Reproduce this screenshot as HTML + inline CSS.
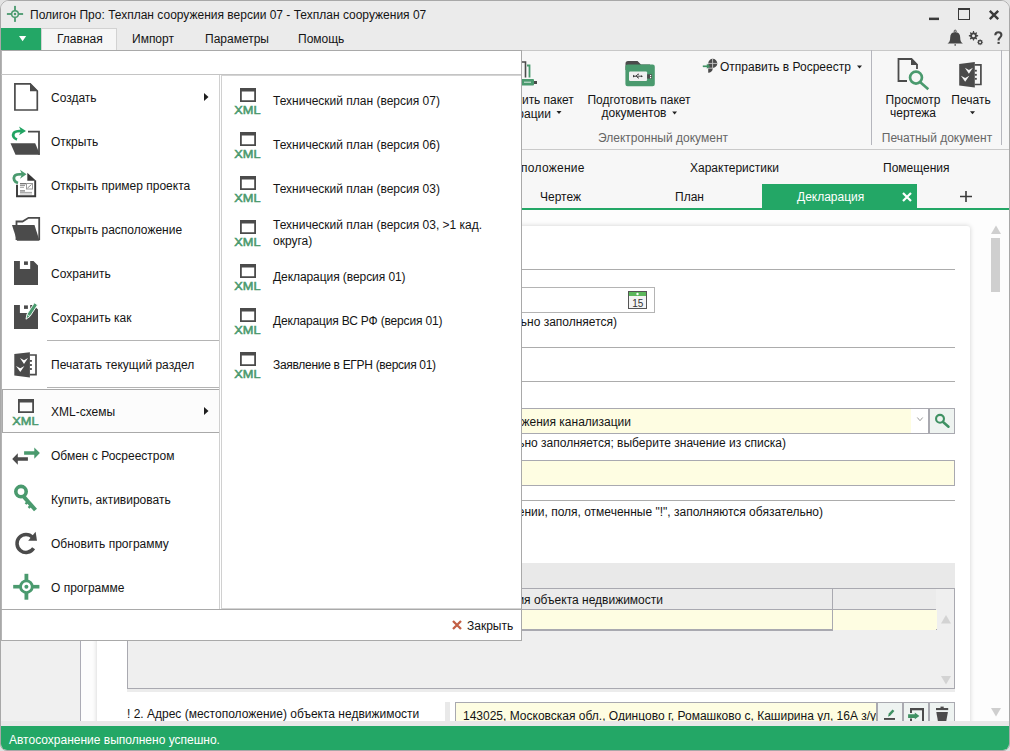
<!DOCTYPE html>
<html><head><meta charset="utf-8">
<style>
*{box-sizing:border-box}
html,body{margin:0;padding:0}
body{width:1010px;height:751px;overflow:hidden;position:relative;background:#e2e2e2;font-family:"Liberation Sans",sans-serif;font-size:12px;color:#141414}
.a{position:absolute}
.t{position:absolute;white-space:nowrap;line-height:15px;height:15px}
svg{position:absolute;overflow:visible}
</style></head><body>
<div class="a" style="left:0;top:0;width:1010px;height:751px;border:1px solid #a8a8a8;border-radius:9px 9px 7px 7px;background:#fafafa"></div>
<div class="a" style="left:1px;top:1px;width:1008px;height:27px;background:#ebebeb;border-radius:8px 8px 0 0"></div>
<svg style="left:0;top:0" width="30" height="28">
  <g fill="#4a9a6e"><rect x="14.1" y="5.9" width="1.8" height="16"/><rect x="6.9" y="13.1" width="16.2" height="1.8"/></g>
  <circle cx="15" cy="14" r="3.35" fill="#ebebeb" stroke="#4a9a6e" stroke-width="1.5"/>
  <circle cx="15" cy="14" r="1.25" fill="#4a9a6e"/>
</svg>
<div class="t" style="left:30px;top:8px;">Полигон Про: Техплан сооружения версии 07 - Техплан сооружения 07</div>
<svg style="left:0;top:0" width="1010" height="28"><rect x="929" y="17.6" width="10" height="2.5" fill="#3a3a3a"/></svg>
<div class="a" style="left:958px;top:8px;width:12px;height:12px;border:1.5px solid #3a3a3a;border-top-width:2px"></div>
<svg style="left:989px;top:10px" width="10" height="10"><path d="M0.8 0.8L9.2 9.2M9.2 0.8L0.8 9.2" stroke="#3a3a3a" stroke-width="2.4"/></svg>
<div class="a" style="left:1px;top:28px;width:1008px;height:22px;background:#ebebeb"></div>
<div class="a" style="left:1px;top:28px;width:40px;height:22px;background:#23a766"></div>
<svg style="left:19px;top:36px" width="7" height="6"><path d="M0 0H7.2L3.6 5.2Z" fill="#fff"/></svg>
<div class="a" style="left:41px;top:28px;width:76px;height:23px;background:#f6f6f6;border:1px solid #d2d2d2;border-bottom:none"></div>
<div class="t" style="left:57px;top:32px;">Главная</div>
<div class="t" style="left:132px;top:32px;">Импорт</div>
<div class="t" style="left:205px;top:32px;">Параметры</div>
<div class="t" style="left:298px;top:32px;">Помощь</div>
<div class="a" style="left:1px;top:50px;width:1008px;height:100px;background:#f7f7f7;border-top:1px solid #c8c8c8;border-bottom:1px solid #cacaca"></div>
<div class="a" style="left:1px;top:150px;width:1008px;height:58px;background:#f7f7f7"></div>
<div class="t" style="left:521px;top:161px;letter-spacing:0.28px">положение</div>
<div class="t" style="left:690px;top:161px;">Характеристики</div>
<div class="t" style="left:883px;top:161px;">Помещения</div>
<div class="t" style="left:540px;top:190px;">Чертеж</div>
<div class="t" style="left:675px;top:190px;">План</div>
<div class="a" style="left:762px;top:184px;width:155px;height:25px;background:#23a766"></div>
<div class="t" style="left:797px;top:190px;color:#fff">Декларация</div>
<div class="a" style="left:1px;top:208px;width:1008px;height:2px;background:#23a766"></div>
<div class="a" style="left:1px;top:210px;width:1008px;height:511px;background:#fdfdfd"></div>
<div class="a" style="left:1px;top:210px;width:80px;height:511px;background:#f0f0f0;border-right:1px solid #acacb6"></div>
<div class="a" style="left:97px;top:226px;width:873px;height:500px;background:#fff;border-radius:3px;box-shadow:0 0 5px rgba(0,0,0,.18)"></div>
<svg style="left:0;top:0" width="1010" height="150">
<path d="M515 62H525.5V77.5" fill="none" stroke="#4b4b4b" stroke-width="1.6"/>
<path d="M527 65.5H529.5V77.5" fill="none" stroke="#4a9a6e" stroke-width="1.8"/>
<rect x="521" y="79" width="13" height="6.5" rx="1" fill="#4a9a6e"/>
<rect x="534" y="81" width="3" height="3" fill="#4b4b4b"/>
<path d="M524 82.2H531" stroke="#fff" stroke-width="0.8"/>
<!-- folder usb -->
<path d="M625.5 80V63.5Q625.5 61 628 61H637.5L641 64.6H650V70H625.5Z" fill="#4b4b4b"/>
<rect x="625.4" y="64.6" width="29.4" height="21.7" rx="2.2" fill="#4a9a6e"/>
<rect x="629" y="71.4" width="18.1" height="9.5" rx="1.2" fill="#f0f0f0"/>
<rect x="647.1" y="74.3" width="4.8" height="4.3" fill="#4b4b4b"/>
<rect x="650" y="75" width="1.2" height="1.2" fill="#fff"/>
<rect x="650" y="77" width="1.2" height="1.2" fill="#fff"/>
<path d="M633.5 76.2H641.5M635.8 76.2L637.8 74.2H639M636.5 76.2L638 78H639" fill="none" stroke="#333" stroke-width="0.9"/>
<path d="M633 74.8V77.6L634.8 76.2Z" fill="#333"/><path d="M641 75.2L643 76.2L641 77.2Z" fill="#333"/>
<!-- Отправить icon -->
<path d="M708.2 63.4A4.55 4.55 0 1 1 712.75 67.95V68.3C712.75 71.2 710.8 72.8 708.2 72.8Z" fill="#4b4b4b"/>
<path d="M712.6 58.5V68.3M707.8 63.4H717.5M707.8 68.2H712.8" stroke="#c8c8c8" stroke-width="0.9"/>
<path d="M702.8 66.3H707.5" stroke="#3f9163" stroke-width="1.7"/>
<path d="M706.8 63.8L710.2 66.3L706.8 68.8Z" fill="#3f9163"/>
<!-- dropdown arrows -->
<path d="M857 65.5H862L859.5 68.5Z" fill="#222"/>
<path d="M556.5 111H561.5L559 114Z" fill="#222"/>
<path d="M672.2 111.5H677L674.6 114.5Z" fill="#222"/>
<path d="M970 111.2H975L972.5 114.2Z" fill="#222"/>
<!-- separators -->
<rect x="871" y="50" width="1" height="95" fill="#b5b6bd"/>
<rect x="1001" y="50" width="1" height="95" fill="#b5b6bd"/>
<!-- Просмотр чертежа -->
<path d="M907 81H898.5V59H911.5L917 64.5V69" fill="none" stroke="#4b4b4b" stroke-width="1.8"/>
<path d="M911 58.2L917.8 65H911Z" fill="#4b4b4b"/>
<circle cx="916" cy="77.6" r="5.95" fill="none" stroke="#4a9a6e" stroke-width="2.7"/>
<path d="M920.3 82.3L928.3 89.2" stroke="#4a9a6e" stroke-width="2.6"/>
<g transform="translate(944.9,-290.2)">
<path d="M29.7 355H36V374.7H29.7" fill="none" stroke="#4b4b4b" stroke-width="1.7"/>
<path d="M14.3 354.1L29.9 352.3V377.6L14.3 375.6Z" fill="#4b4b4b"/>
<rect x="29.9" y="360" width="2" height="1.8" fill="#4b4b4b"/>
<rect x="29.9" y="364.1" width="2" height="1.8" fill="#4b4b4b"/>
<rect x="29.9" y="368.1" width="2" height="1.8" fill="#4b4b4b"/>
<path d="M20 358L24 360.3L28 358L24 364Z" fill="#f7f7f7"/>
<path d="M16 366L20.3 368.3L24.4 366L20.3 372Z" fill="#f7f7f7"/>
</g>
</svg>
<div class="t" style="left:522px;top:93px;letter-spacing:-0.05px">ить пакет</div>
<div class="t" style="right:459px;top:107px">декларации</div>
<div class="t" style="left:489px;width:300px;text-align:center;top:93px;">Подготовить пакет</div>
<div class="t" style="left:489px;width:300px;text-align:center;top:106px;">документов&nbsp;&nbsp;&nbsp;</div>
<div class="t" style="left:720px;top:60px;">Отправить в Росреестр</div>
<div class="t" style="left:513px;width:300px;text-align:center;top:131px;color:#666666">Электронный документ</div>
<div class="t" style="left:763px;width:300px;text-align:center;top:93px;">Просмотр</div>
<div class="t" style="left:763px;width:300px;text-align:center;top:106px;">чертежа</div>
<div class="t" style="left:821px;width:300px;text-align:center;top:93px;">Печать</div>
<div class="t" style="left:787px;width:300px;text-align:center;top:131px;color:#666666">Печатный документ</div>
<svg style="left:902px;top:192px" width="10" height="10"><path d="M1 1L9 9M9 1L1 9" stroke="#fff" stroke-width="2.2"/></svg>
<svg style="left:960px;top:191px" width="12" height="11"><path d="M6 0V11M0 5.5H12" stroke="#3a3a3a" stroke-width="1.6"/></svg>
<svg style="left:0;top:0" width="1010" height="50">
<path d="M947.5 43.5C949.5 42.2 950.2 40.5 950.2 37.5C950.2 34.2 951.8 32.3 955.2 32.3C958.6 32.3 960.2 34.2 960.2 37.5C960.2 40.5 960.9 42.2 962.9 43.5Z" fill="#444"/>
<circle cx="955.2" cy="31.2" r="1.1" fill="none" stroke="#444" stroke-width="0.9"/>
<rect x="954.4" y="44.3" width="1.6" height="1.3" fill="#444"/>
<path d="M973.04 31.12L973.96 31.12L974.46 32.64L975.06 32.89L976.48 32.17L977.13 32.82L976.41 34.24L976.66 34.84L978.18 35.34L978.18 36.26L976.66 36.76L976.41 37.36L977.13 38.78L976.48 39.43L975.06 38.71L974.46 38.96L973.96 40.48L973.04 40.48L972.54 38.96L971.94 38.71L970.52 39.43L969.87 38.78L970.59 37.36L970.34 36.76L968.82 36.26L968.82 35.34L970.34 34.84L970.59 34.24L969.87 32.82L970.52 32.17L971.94 32.89L972.54 32.64ZM975.00 35.80A1.5 1.5 0 1 0 972.00 35.80A1.5 1.5 0 1 0 975.00 35.80Z" fill="#444" fill-rule="evenodd"/>
<path d="M979.81 39.21L980.39 39.21L980.74 40.09L981.14 40.26L982.00 39.88L982.42 40.30L982.04 41.16L982.21 41.56L983.09 41.91L983.09 42.49L982.21 42.84L982.04 43.24L982.42 44.10L982.00 44.52L981.14 44.14L980.74 44.31L980.39 45.19L979.81 45.19L979.46 44.31L979.06 44.14L978.20 44.52L977.78 44.10L978.16 43.24L977.99 42.84L977.11 42.49L977.11 41.91L977.99 41.56L978.16 41.16L977.78 40.30L978.20 39.88L979.06 40.26L979.46 40.09ZM981.10 42.20A1.0 1.0 0 1 0 979.10 42.20A1.0 1.0 0 1 0 981.10 42.20Z" fill="#444" fill-rule="evenodd"/>
<path d="M995.3 35.3C995.3 33.2 996.7 32.2 998.4 32.2C1000.2 32.2 1001.4 33.3 1001.4 35C1001.4 37.2 998.6 37.6 998.6 39.8V40.5" fill="none" stroke="#444" stroke-width="2.1"/>
<rect x="997.5" y="41.9" width="2.2" height="2" fill="#444"/>
</svg>
<div class="a" style="left:100px;top:269px;width:855px;height:1px;background:#acacac"></div>
<div class="a" style="left:100px;top:347px;width:855px;height:1px;background:#acacac"></div>
<div class="a" style="left:100px;top:381px;width:855px;height:1px;background:#acacac"></div>
<div class="a" style="left:100px;top:500px;width:855px;height:1px;background:#acacac"></div>
<div class="a" style="left:300px;top:287px;width:355px;height:26px;background:#fff;border:1px solid #b4b4b4"></div>
<svg style="left:628px;top:291px" width="19" height="18">
<rect x="0.5" y="0.5" width="18" height="17" fill="#f4f4f4" stroke="#555" stroke-width="1"/>
<rect x="1" y="1" width="17" height="4" fill="#5cb85c"/>
<circle cx="9.5" cy="3" r="1.2" fill="#fff"/>
<text x="9.7" y="15.5" font-family="Liberation Sans" font-size="10" fill="#333" text-anchor="middle">15</text>
</svg>
<div class="t" style="right:393px;top:315px;">Дата (обязательно заполняется)</div>
<div class="a" style="left:300px;top:408px;width:629px;height:26px;background:#fefde2;border:1px solid #a9a9b0"></div>
<div class="a" style="left:911px;top:409px;width:17px;height:24px;background:#fff"></div>
<svg style="left:917px;top:417px" width="7" height="5"><path d="M0.3 0.5L3 3.7L5.7 0.5" fill="none" stroke="#9a9a9a" stroke-width="1"/></svg>
<div class="a" style="left:928px;top:408px;width:27px;height:26px;background:#eef3f0;border:1px solid #a9a9b0;border-left:2px solid #a9a9b0"></div>
<svg style="left:933px;top:412px" width="18" height="18">
<circle cx="7" cy="6.8" r="3.95" fill="none" stroke="#3f9163" stroke-width="2.1"/>
<path d="M9.8 9.8L15.5 14.8" stroke="#3f9163" stroke-width="2.5" stroke-linecap="round"/>
</svg>
<div class="t" style="right:379px;top:415px;">Вид сооружения канализации</div>
<div class="t" style="right:224px;top:436px;">Назначение (обязательно заполняется; выберите значение из списка)</div>
<div class="a" style="left:300px;top:460px;width:655px;height:26px;background:#fefde2;border:1px solid #a9a9b0"></div>
<div class="t" style="right:187px;top:505px;">Примечание (при заполнении, поля, отмеченные "!", заполняются обязательно)</div>
<div class="a" style="left:127px;top:563px;width:828px;height:26px;background:#e9e9e9"></div>
<div class="a" style="left:127px;top:588px;width:828px;height:101px;background:#efefef;border:1px solid #a9a9b0"></div>
<div class="a" style="left:128px;top:589px;width:808px;height:20px;background:#ebebeb"></div>
<div class="a" style="left:128px;top:609px;width:808px;height:1px;background:#a9a9b0"></div>
<div class="a" style="left:128px;top:610px;width:809px;height:20px;background:#fefde2;border-bottom:1px solid #a9a9b0"></div>
<div class="a" style="left:832px;top:589px;width:1px;height:42px;background:#a9a9b0"></div>
<div class="a" style="left:833px;top:610px;width:103px;height:20px;background:#fefde2"></div>
<div class="a" style="left:128px;top:630px;width:705px;height:1px;background:#a9a9b0"></div>
<div class="t" style="right:347px;top:593px;">Назначения объекта недвижимости</div>
<svg style="left:940.5px;top:615px" width="10" height="9"><path d="M0 8.5L5 0L10 8.5Z" fill="#d3d3d3"/></svg>
<svg style="left:940.5px;top:676px" width="10" height="9"><path d="M0 0L5 8.5L10 0Z" fill="#d3d3d3"/></svg>
<div class="a" style="left:127px;top:689px;width:828px;height:3px;background:#ececec"></div>
<div class="t" style="left:127px;top:707px;">! 2. Адрес (местоположение) объекта недвижимости</div>
<div class="a" style="left:445px;top:702px;width:5px;height:19px;background:#e9e9e9"></div>
<div class="a" style="left:455px;top:702px;width:422px;height:26px;background:#fefde2;border:1px solid #a9a9b0"></div>
<div class="a" style="left:456px;top:703px;width:420px;height:18px;overflow:hidden"><div class="t" style="left:7px;top:6px">143025, Московская обл., Одинцово г, Ромашково с, Каширина ул, 16А з/у, кв. 2</div></div>
<div class="a" style="left:877px;top:702px;width:26px;height:26px;background:#eef3f1;border:1px solid #a9a9b0;border-left:none"></div>
<div class="a" style="left:903px;top:702px;width:26px;height:26px;background:#eef3f1;border:1px solid #a9a9b0;border-left:none"></div>
<div class="a" style="left:929px;top:702px;width:26px;height:26px;background:#eef3f1;border:1px solid #a9a9b0;border-left:none"></div>
<svg style="left:0;top:0" width="1010" height="751">
<rect x="876" y="702" width="2" height="19" fill="#a9a9b0"/>
<rect x="902" y="702" width="2" height="19" fill="#a9a9b0"/>
<rect x="928" y="702" width="2" height="19" fill="#a9a9b0"/>
<rect x="884" y="718" width="11" height="1.9" fill="#4b4b4b"/>
<path d="M888 716.8L888.8 713.6L892.5 709.6L894.4 711.1L890.6 715.2Z" fill="#3f9163"/>
<path d="M911 710V713M923 710V721" fill="none" stroke="#4b4b4b" stroke-width="2"/>
<rect x="910" y="708" width="14" height="2.3" fill="#4b4b4b"/>
<rect x="910" y="718.5" width="2" height="2.5" fill="#4b4b4b"/>
<path d="M908.1 714.3H914.8V712.6L919.4 715.9L914.8 719.2V717.9H908.1Z" fill="#3f9163"/>
<rect x="936" y="708" width="12.2" height="2.1" fill="#4b4b4b"/>
<rect x="940.5" y="706.6" width="3.2" height="1.6" fill="#4b4b4b"/>
<path d="M936.3 711.9H947.9L946.3 721H937.9Z" fill="#4b4b4b"/>
</svg>
<svg style="left:991px;top:225px" width="10" height="10"><path d="M0 9L5 0.5L10 9Z" fill="#cfcfcf"/></svg>
<div class="a" style="left:991px;top:238px;width:9px;height:54px;background:#cfcfcf"></div>
<svg style="left:991px;top:708px" width="10" height="10"><path d="M0 0L5 8.5L10 0Z" fill="#cfcfcf"/></svg>
<div class="a" style="left:1px;top:721px;width:1008px;height:5px;background:#e8e8e8"></div>
<div class="a" style="left:1px;top:726px;width:1008px;height:24px;background:#23a766;border-radius:0 0 6px 6px"></div>
<div class="t" style="left:9px;top:733px;color:#fff">Автосохранение выполнено успешно.</div>
<div class="a" style="left:1px;top:50px;width:521px;height:591px;background:#fff;border:1px solid #a9a9a9;border-left:1px solid #b4b4b4"></div>
<div class="a" style="left:1px;top:74px;width:520px;height:1px;background:#c4c4c4"></div>
<div class="a" style="left:219px;top:75px;width:1px;height:534px;background:#d0d0d0"></div>
<div class="a" style="left:221px;top:75px;width:1px;height:534px;background:#d0d0d0"></div>
<div class="a" style="left:221px;top:75px;width:300px;height:1px;background:#d4d4d4"></div>
<div class="a" style="left:221px;top:608px;width:300px;height:1px;background:#d4d4d4"></div>
<div class="a" style="left:1px;top:609px;width:520px;height:1px;background:#a9a9a9"></div>
<div class="a" style="left:2px;top:389px;width:217px;height:44px;background:#fcfcfc;border:1px solid #a9a9a9;border-right:none"></div>
<div class="a" style="left:47px;top:340px;width:172px;height:1px;background:#b4b4b4"></div>
<div class="a" style="left:47px;top:387px;width:172px;height:1px;background:#b4b4b4"></div>
<div class="t" style="left:51px;top:91px;">Создать</div>
<div class="t" style="left:51px;top:135px;">Открыть</div>
<div class="t" style="left:51px;top:179px;">Открыть пример проекта</div>
<div class="t" style="left:51px;top:223px;">Открыть расположение</div>
<div class="t" style="left:51px;top:267px;">Сохранить</div>
<div class="t" style="left:51px;top:311px;">Сохранить как</div>
<div class="t" style="left:51px;top:358px;">Печатать текущий раздел</div>
<div class="t" style="left:51px;top:405px;">XML-схемы</div>
<div class="t" style="left:51px;top:449px;">Обмен с Росреестром</div>
<div class="t" style="left:51px;top:493px;">Купить, активировать</div>
<div class="t" style="left:51px;top:537px;">Обновить программу</div>
<div class="t" style="left:51px;top:581px;">О программе</div>
<svg style="left:204px;top:93px" width="5" height="8"><path d="M0 0L4.5 4L0 8Z" fill="#1e1e1e"/></svg>
<svg style="left:204px;top:407px" width="5" height="8"><path d="M0 0L4.5 4L0 8Z" fill="#1e1e1e"/></svg>
<svg style="left:0;top:75px" width="220" height="534">
<path d="M14.9 8.9H30.2L37.3 16V35H14.9Z" fill="none" stroke="#4b4b4b" stroke-width="1.7"/>
<path d="M30 8.2L38 16.2H30Z" fill="#4b4b4b"/>
<path d="M28 56.7H39V79.7" fill="none" stroke="#4b4b4b" stroke-width="1.8"/>
<path d="M10.5 68.3H35.2L40 79.7H15.5Z" fill="#4b4b4b"/>
<path d="M17 64.5C13.5 63.3 12.3 60.5 13.8 58C15 56.2 17 55.9 23 55.9" fill="none" stroke="#22a463" stroke-width="2.8"/>
<path d="M19 51.5L26 56L19 60.3L21 56Z" fill="#22a463"/>
</svg>
<svg style="left:234px;top:88px" width="28" height="28">
<path d="M6 0H22V14H6ZM7.8 3.6V12.2H20.2V3.6Z" fill="#4b4b4b" fill-rule="evenodd"/>
<text x="0.3" y="25.8" font-family="Liberation Sans" font-size="11.7" fill="#4a9a6e" stroke="#4a9a6e" stroke-width="0.55" textLength="26.2" lengthAdjust="spacingAndGlyphs">XML</text>
</svg>
<svg style="left:234px;top:132px" width="28" height="28">
<path d="M6 0H22V14H6ZM7.8 3.6V12.2H20.2V3.6Z" fill="#4b4b4b" fill-rule="evenodd"/>
<text x="0.3" y="25.8" font-family="Liberation Sans" font-size="11.7" fill="#4a9a6e" stroke="#4a9a6e" stroke-width="0.55" textLength="26.2" lengthAdjust="spacingAndGlyphs">XML</text>
</svg>
<svg style="left:234px;top:176px" width="28" height="28">
<path d="M6 0H22V14H6ZM7.8 3.6V12.2H20.2V3.6Z" fill="#4b4b4b" fill-rule="evenodd"/>
<text x="0.3" y="25.8" font-family="Liberation Sans" font-size="11.7" fill="#4a9a6e" stroke="#4a9a6e" stroke-width="0.55" textLength="26.2" lengthAdjust="spacingAndGlyphs">XML</text>
</svg>
<svg style="left:234px;top:264px" width="28" height="28">
<path d="M6 0H22V14H6ZM7.8 3.6V12.2H20.2V3.6Z" fill="#4b4b4b" fill-rule="evenodd"/>
<text x="0.3" y="25.8" font-family="Liberation Sans" font-size="11.7" fill="#4a9a6e" stroke="#4a9a6e" stroke-width="0.55" textLength="26.2" lengthAdjust="spacingAndGlyphs">XML</text>
</svg>
<svg style="left:234px;top:308px" width="28" height="28">
<path d="M6 0H22V14H6ZM7.8 3.6V12.2H20.2V3.6Z" fill="#4b4b4b" fill-rule="evenodd"/>
<text x="0.3" y="25.8" font-family="Liberation Sans" font-size="11.7" fill="#4a9a6e" stroke="#4a9a6e" stroke-width="0.55" textLength="26.2" lengthAdjust="spacingAndGlyphs">XML</text>
</svg>
<svg style="left:234px;top:352px" width="28" height="28">
<path d="M6 0H22V14H6ZM7.8 3.6V12.2H20.2V3.6Z" fill="#4b4b4b" fill-rule="evenodd"/>
<text x="0.3" y="25.8" font-family="Liberation Sans" font-size="11.7" fill="#4a9a6e" stroke="#4a9a6e" stroke-width="0.55" textLength="26.2" lengthAdjust="spacingAndGlyphs">XML</text>
</svg>
<svg style="left:234px;top:220px" width="28" height="28">
<path d="M6 0H22V14H6ZM7.8 3.6V12.2H20.2V3.6Z" fill="#4b4b4b" fill-rule="evenodd"/>
<text x="0.3" y="25.8" font-family="Liberation Sans" font-size="11.7" fill="#4a9a6e" stroke="#4a9a6e" stroke-width="0.55" textLength="26.2" lengthAdjust="spacingAndGlyphs">XML</text>
</svg>
<div class="t" style="left:273px;top:94px;">Технический план (версия 07)</div>
<div class="t" style="left:273px;top:138px;">Технический план (версия 06)</div>
<div class="t" style="left:273px;top:182px;">Технический план (версия 03)</div>
<div class="t" style="left:273px;top:218px;">Технический план (версия 03, &gt;1 кад.</div>
<div class="t" style="left:273px;top:234px;">округа)</div>
<div class="t" style="left:273px;top:270px;letter-spacing:-0.07px">Декларация (версия 01)</div>
<div class="t" style="left:273px;top:314px;letter-spacing:-0.17px">Декларация ВС РФ (версия 01)</div>
<div class="t" style="left:273px;top:358px;letter-spacing:-0.3px">Заявление в ЕГРН (версия 01)</div>
<svg style="left:12px;top:399px" width="28" height="28">
<path d="M6 0H22V14H6ZM7.8 3.6V12.2H20.2V3.6Z" fill="#4b4b4b" fill-rule="evenodd"/>
<text x="0.3" y="25.8" font-family="Liberation Sans" font-size="11.7" fill="#4a9a6e" stroke="#4a9a6e" stroke-width="0.55" textLength="26.2" lengthAdjust="spacingAndGlyphs">XML</text>
</svg>
<svg style="left:452px;top:620px" width="10" height="10"><path d="M1 1L9 9M9 1L1 9" stroke="#c25f45" stroke-width="2.3"/></svg>
<div class="t" style="left:467px;top:619px;">Закрыть</div>
<svg style="left:0;top:0" width="220" height="640">
<!-- Открыть пример проекта: doc 16..36 x 173..197 -->
<path d="M17 184.7V196.2H35.2V180.5" fill="none" stroke="#383838" stroke-width="1.9"/>
<path d="M27.3 172.8L36.1 180.8H27.3Z" fill="#383838"/>
<rect x="20" y="183" width="6" height="1.3" fill="#777"/>
<rect x="20" y="184.8" width="5" height="1.3" fill="#999"/>
<rect x="20" y="186.8" width="4" height="1.1" fill="#aaa"/>
<rect x="26.5" y="183.5" width="6" height="5.5" fill="none" stroke="#9a9a9a" stroke-width="1"/>
<path d="M27.5 188L31.5 184.5" stroke="#777" stroke-width="0.9"/>
<rect x="20" y="190.3" width="5" height="1.2" fill="#777"/>
<rect x="20" y="191.9" width="12" height="1.1" fill="#aaa"/>
<rect x="20" y="193.4" width="12" height="1.1" fill="#bbb"/>
<path d="M18 183C14.2 182 13 178.5 14.5 176C15.8 174.3 18 174.2 23 174.2" fill="none" stroke="#4a9a6e" stroke-width="2.8"/>
<path d="M20 169.8L26.5 174.3L20 178.7L22 174.3Z" fill="#4a9a6e"/>
<!-- Открыть расположение: folder 12..40 x 217..241 -->
<path d="M16.5 240V221.5H22.5L28.5 217.8H39.2V240" fill="none" stroke="#4b4b4b" stroke-width="1.8"/>
<path d="M12 225H34.5L39.5 240.8H17Z" fill="#4b4b4b"/>
<!-- Сохранить: 14..38 x 261..285 -->
<path d="M14 261H19.9V269H30.2V261H33.5L38 265.5V285H14Z" fill="#4b4b4b"/>
<rect x="24" y="261.4" width="3.9" height="3.5" fill="#4b4b4b"/>
<!-- Сохранить как: 14..38 x 305..329 -->
<path d="M14 305H19.9V313H30.2V305H33.5L38 309.5V329H14Z" fill="#4b4b4b"/>
<rect x="24" y="305.4" width="3.9" height="3.5" fill="#4b4b4b"/>
<path d="M26 319.2L26.9 314.3L34.4 302.8L37.5 304.9L30 316.4Z" fill="#4a9a6e" stroke="#fff" stroke-width="0.9"/>
<path d="M26.9 314.3L30 316.4" stroke="#fff" stroke-width="0.8"/>
<g transform="translate(0,0)">
<path d="M29.7 355H36V374.7H29.7" fill="none" stroke="#4b4b4b" stroke-width="1.7"/>
<path d="M14.3 354.1L29.9 352.3V377.6L14.3 375.6Z" fill="#4b4b4b"/>
<rect x="29.9" y="360" width="2" height="1.8" fill="#4b4b4b"/>
<rect x="29.9" y="364.1" width="2" height="1.8" fill="#4b4b4b"/>
<rect x="29.9" y="368.1" width="2" height="1.8" fill="#4b4b4b"/>
<path d="M20 358L24 360.3L28 358L24 364Z" fill="#fff"/>
<path d="M16 366L20.3 368.3L24.4 366L20.3 372Z" fill="#fff"/>
</g>
<!-- Обмен: arrows -->
<path d="M24.1 451.2H34.3V447.4L39.9 453L34.3 458.8V454.7H24.1Z" fill="#4a9a6e"/>
<path d="M27.9 457.3H17.8V453.3L12.2 459L17.8 464.7V460.7H27.9Z" fill="#4b4b4b"/>
<!-- Купить: key -->
<circle cx="21" cy="491.6" r="5.2" fill="none" stroke="#4a9a6e" stroke-width="3.6"/>
<path d="M24 497L35.5 510" stroke="#4a9a6e" stroke-width="4"/>
<path d="M27.3 502.3L25.5 504M30.5 506L28.5 507.8" stroke="#4a9a6e" stroke-width="2.4"/>
<!-- Обновить: refresh -->
<path d="M33.6 548.3A9 9 0 1 1 32.6 537.3" fill="none" stroke="#4b4b4b" stroke-width="3.5"/>
<path d="M35.6 531.8L37 540.8H28.2Z" fill="#4b4b4b"/>
<!-- О программе: crosshair -->
<rect x="24.5" y="573.8" width="3.8" height="25.9" fill="#4a9a6e"/>
<rect x="13.2" y="584.9" width="26.2" height="3.6" fill="#4a9a6e"/>
<circle cx="26.4" cy="586.7" r="5.85" fill="#fff" stroke="#4a9a6e" stroke-width="2.8"/>
<circle cx="26.4" cy="586.7" r="2" fill="#4a9a6e"/>
</svg>
</body></html>
